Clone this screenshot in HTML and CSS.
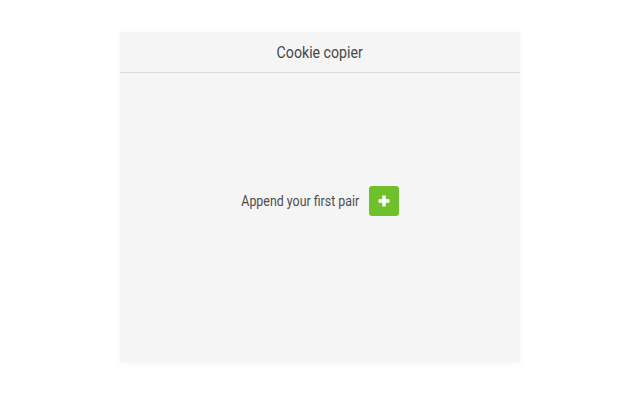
FILE: index.html
```html
<!DOCTYPE html>
<html>
<head>
<meta charset="utf-8">
<link rel="stylesheet" href="styles.css">
</head>
<body>
<div class="page">
  <div class="panel">
    <div class="header"><span class="title">Cookie copier</span></div>
    <div class="body">
      <div class="empty">
        <span class="empty-text">Append your first pair</span>
        <button class="add-btn" aria-label="Add">
          <svg width="12" height="12" viewBox="0 0 12 12"><path d="M6 0.5v11M0.5 6h11" stroke="#fff" stroke-width="3.6"/></svg>
        </button>
      </div>
    </div>
  </div>
</div>
</body>
</html>
```

FILE: styles.css
```css
html, body {
  margin: 0;
  padding: 0;
  background: #ffffff;
  font-family: Roboto, "Liberation Sans", sans-serif;
}
.page {
  width: 640px;
  height: 400px;
  padding-top: 32px;
  box-sizing: border-box;
  display: flex;
  justify-content: center;
}
.panel {
  width: 400px;
  height: 330px;
  background: #f5f5f5;
  box-shadow: 0 1px 5px rgba(0,0,0,0.05);
  display: flex;
  flex-direction: column;
}
.header {
  height: 41px;
  border-bottom: 1px solid #d9d9d9;
  display: flex;
  align-items: center;
  justify-content: center;
  box-sizing: border-box;
}
.title {
  display: inline-block;
  font-size: 16px;
  color: #474747;
  transform: scaleX(0.885);
}
.body {
  flex: 1;
  display: flex;
  align-items: center;
  justify-content: center;
  padding-bottom: 34px;
}
.empty {
  display: flex;
  align-items: center;
  gap: 10px;
}
.empty-text {
  display: inline-block;
  font-size: 14px;
  color: #4d4d4d;
  transform: scaleX(0.885);
  transform-origin: right center;
  margin-left: -15px;
}
.add-btn {
  width: 30px;
  height: 30px;
  border: none;
  border-radius: 3px;
  background: #6ec12a;
  padding: 0;
  display: flex;
  align-items: center;
  justify-content: center;
}
```
